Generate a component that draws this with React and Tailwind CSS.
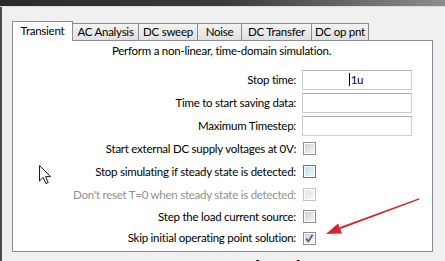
import React from "react";

function Tab({ label, w, selected }) {
  if (selected) {
    return (
      <div
        className={`relative z-10 -mb-px h-[20px] ${w} flex items-center justify-center bg-white border border-b-0 border-[#898c95] text-black whitespace-nowrap`}
      >
        <span className="-mt-px">{label}</span>
      </div>
    );
  }
  return (
    <div
      className={`h-[17px] ${w} flex items-center justify-center bg-linear-to-b from-[#f3f3f3] to-[#e1e1e1] border border-b-0 border-[#898c95] -ml-px text-black whitespace-nowrap`}
    >
      <span>{label}</span>
    </div>
  );
}

function CheckBox({ kind }) {
  let outer = "border-[#8e8f8f]";
  let inner = "bg-linear-to-br from-[#cdd0d4] to-[#f7f7f7]";
  if (kind === "hover") {
    outer = "border-[#3c7fb1]";
    inner = "bg-linear-to-br from-[#b3e2f8] to-[#e9f8fe]";
  } else if (kind === "disabled") {
    outer = "border-[#c2c2c2]";
    inner = "bg-linear-to-br from-[#e4e4e4] to-[#f5f5f5]";
  }
  return (
    <div className={`ml-px w-[13px] h-[13px] border ${outer} bg-white p-px relative`}>
      <div className={`w-full h-full ${inner}`} />
      {kind === "checked" && (
        <svg className="absolute left-0 top-0" width="11" height="11" viewBox="0 0 11 11">
          <path d="M2.2 5.6 L4.4 8.4 L8.6 1.8" fill="none" stroke="#4a5c92" strokeWidth="1.7" />
        </svg>
      )}
    </div>
  );
}

function InputRow({ label, value }) {
  return (
    <div className="h-[20px] grid grid-cols-[283px_1fr] items-center">
      <div className="text-right whitespace-nowrap">{label}</div>
      <div className="pl-[6px]">
        <div className="w-[110px] h-[20px] border border-[#c9ccd2] border-t-[#abadb3] bg-white flex items-center justify-center">
          {value && (
            <span className="relative">
              <span className="absolute -left-[2px] top-[1px] w-px h-[13px] bg-black" />
              {value}
            </span>
          )}
        </div>
      </div>
    </div>
  );
}

function CheckRow({ label, h, kind, disabled }) {
  return (
    <div className={`${h} grid grid-cols-[283px_1fr] items-center`}>
      <div className={`text-right whitespace-nowrap ${disabled ? "text-[#8f8f8f]" : "text-black"}`}>{label}</div>
      <div className="pl-[6px]">
        <CheckBox kind={kind} />
      </div>
    </div>
  );
}

export default function App() {
  return (
    <div className="relative w-[445px] h-[261px] overflow-hidden bg-[#f0f0f0] flex flex-col font-['Lato',sans-serif] text-[11.5px] tracking-[-0.25px] leading-[16px] text-black">
      <div className="h-[6px] shrink-0 bg-linear-to-r from-[#2a2a2a] via-[#3a3a3a] to-[#8e8e8e]" />
      <div className="h-px shrink-0 bg-[#dcdcdc]" />
      <div className="flex-1 border-l-2 border-[#4a4a4a] pl-[10px] pt-[13px]">
        <div className="flex items-end h-[20px]">
          <Tab label="Transient" w="w-[61px]" selected />
          <Tab label="AC Analysis" w="w-[67px]" />
          <Tab label="DC sweep" w="w-[60px]" />
          <Tab label="Noise" w="w-[45px]" />
          <Tab label="DC Transfer" w="w-[71px]" />
          <Tab label="DC op pnt" w="w-[58px]" />
        </div>
        <div className="w-[421px] h-[212px] bg-white border border-[#898c95]">
          <div className="mt-[2px] h-[16px] text-center pr-[2px] whitespace-nowrap">
            Perform a non-linear, time-domain simulation.
          </div>
          <div className="mt-[11px] flex flex-col gap-[3px]">
            <InputRow label="Stop time:" value="1u" />
            <InputRow label="Time to start saving data:" />
            <InputRow label="Maximum Timestep:" />
          </div>
          <div className="mt-px flex flex-col">
            <CheckRow h="h-[23px]" label="Start external DC supply voltages at 0V:" kind="normal" />
            <CheckRow h="h-[23px]" label="Stop simulating if steady state is detected:" kind="hover" />
            <CheckRow h="h-[23px]" label="Don't reset T=0 when steady state is detected:" kind="disabled" disabled />
            <CheckRow h="h-[21px]" label="Step the load current source:" kind="normal" />
            <CheckRow h="h-[22px]" label="Skip initial operating point solution:" kind="checked" />
          </div>
        </div>
        <div className="mt-[6px] pl-[118px] font-bold text-[13px] tracking-normal leading-[16px] whitespace-nowrap">
          Syntax: .tran &lt;Tstop&gt; [option]
        </div>
      </div>

      {/* mouse pointer */}
      <svg className="absolute left-[39px] top-[165px]" width="13" height="20" viewBox="0 0 13 20">
        <path
          d="M0.5 0.5 L0.5 16 L4.2 12.4 L6.8 18.6 L9.2 17.6 L6.6 11.6 L11.6 11.6 Z"
          fill="#ffffff"
          stroke="#1a1a1a"
          strokeWidth="1"
          strokeLinejoin="miter"
        />
      </svg>

      {/* red annotation arrow */}
      <svg className="absolute left-[320px] top-[192px]" width="105" height="50" viewBox="320 192 105 50">
        <path d="M419 198.2 L340 227 L339.2 229.6 L419.6 199.6 Z" fill="#d8262b" />
        <path d="M326 234 L338 223.6 L342 233.4 Z" fill="#d8262b" />
      </svg>
    </div>
  );
}
